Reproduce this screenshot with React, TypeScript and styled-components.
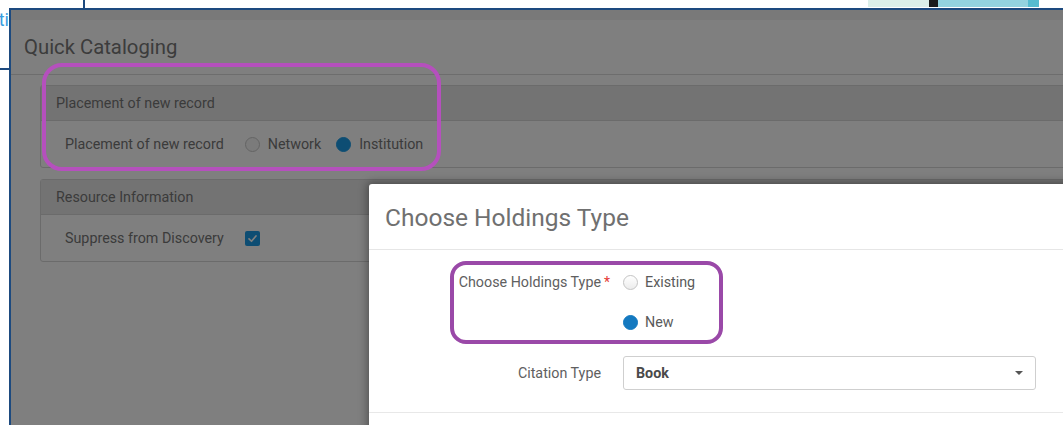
import React from 'react';
import styled, { createGlobalStyle } from 'styled-components';

const GlobalStyle = createGlobalStyle`
  html, body {
    margin: 0;
    padding: 0;
    background: #fff;
  }
  body {
    font-family: Roboto, "Noto Sans", Arial, sans-serif;
  }
`;

const App: React.FC = () => {
  return (
    <>
      <GlobalStyle />
      <Stage>
        <TopStrip>
          <Spacer style={{ width: 83 }} />
          <Rule />
          <Spacer style={{ flex: 1 }} />
          <Swatch color="#dcefe9" width={61} />
          <Swatch color="#1b1b1b" width={9} />
          <Swatch color="#94d3df" width={90} />
          <Swatch color="#56bcd0" width={11} />
          <Spacer style={{ width: 24 }} />
        </TopStrip>

        <SideStrip>
          <SideLink>ti</SideLink>
          <SideRule />
        </SideStrip>

        <Frame>
          <Toolbar />
          <PageHeader>Quick Cataloging</PageHeader>

          <Sections>
            <Section>
              <SectionHeader>Placement of new record</SectionHeader>
              <SectionRow>
                <RowLabel>Placement of new record</RowLabel>
                <Options>
                  <Option>
                    <PageRadio checked={false} />
                    <span>Network</span>
                  </Option>
                  <Option>
                    <PageRadio checked />
                    <span>Institution</span>
                  </Option>
                </Options>
              </SectionRow>
            </Section>

            <Section>
              <SectionHeader>Resource Information</SectionHeader>
              <SectionRow>
                <RowLabel>Suppress from Discovery</RowLabel>
                <Checkbox>
                  <svg width="11" height="11" viewBox="0 0 12 12">
                    <path d="M2.2 6.4 L4.9 9 L9.8 3.2" fill="none" stroke="#fff" strokeWidth="1.8" strokeLinecap="round" strokeLinejoin="round" />
                  </svg>
                </Checkbox>
              </SectionRow>
            </Section>
          </Sections>

          <Backdrop />
          <Highlight color="#b550bd" radius={20} style={{ left: 31, top: 53, width: 399, height: 108 }} />

          <Modal>
            <ModalTitle>Choose Holdings Type</ModalTitle>
            <Form>
              <FieldLabel tall>
                Choose Holdings Type
                <Star>*</Star>
              </FieldLabel>
              <RadioGroup>
                <RadioOption>
                  <ModalRadio checked={false} />
                  <span>Existing</span>
                </RadioOption>
                <RadioOption>
                  <ModalRadio checked />
                  <span>New</span>
                </RadioOption>
              </RadioGroup>

              <FieldLabel>
                Citation Type
                <Star />
              </FieldLabel>
              <Select>
                <span>Book</span>
                <Caret />
              </Select>
            </Form>
            <Highlight color="#9a49a8" radius={16} style={{ left: 81, top: 77, width: 273, height: 83 }} />
          </Modal>
        </Frame>
      </Stage>
    </>
  );
};

export default App;

const Stage = styled.div`
  display: grid;
  grid-template-columns: 9px 1fr;
  grid-template-rows: 8px 1fr;
  width: 1063px;
  height: 425px;
  overflow: hidden;
  background: #fff;
`;

const TopStrip = styled.div`
  grid-column: 1 / -1;
  display: flex;
  height: 8px;
`;

const Spacer = styled.div``;

const Rule = styled.div`
  width: 2px;
  background: #1d4a7f;
`;

const Swatch = styled.div<{ color: string; width: number }>`
  width: ${(p) => p.width}px;
  height: 7px;
  background: ${(p) => p.color};
`;

const SideStrip = styled.div`
  display: flex;
  flex-direction: column;
  overflow: hidden;
`;

const SideLink = styled.div`
  display: flex;
  justify-content: flex-end;
  margin-top: 2px;
  font-size: 18px;
  line-height: 20px;
  color: #3a9de0;
  white-space: nowrap;
`;

const SideRule = styled.div`
  margin-top: 38px;
  height: 2px;
  background: #1d4a7f;
`;

const Frame = styled.div`
  position: relative;
  overflow: hidden;
  border-top: 2px solid #1d4a7f;
  border-left: 2px solid #1d4a7f;
  background: #fff;
`;

const Toolbar = styled.div`
  height: 10px;
  background: #f3f3f3;
`;

const PageHeader = styled.div`
  display: flex;
  align-items: center;
  height: 54px;
  padding-left: 13px;
  border-bottom: 1px solid #dadada;
  font-size: 20.3px;
  color: #787878;
`;

const Sections = styled.div`
  display: flex;
  flex-direction: column;
  gap: 11px;
  padding: 10px 0 0 29px;
  margin-right: -40px;
`;

const Section = styled.div`
  border: 1px solid #d6d6d6;
  border-radius: 3px;
  background: #fff;
`;

const SectionHeader = styled.div`
  display: flex;
  align-items: center;
  height: 34px;
  padding-left: 15px;
  background: #e7e7e7;
  border-bottom: 1px solid #d6d6d6;
  font-size: 14.3px;
  color: #777;
`;

const SectionRow = styled.div`
  display: flex;
  align-items: center;
  gap: 21px;
  height: 46px;
  padding-left: 24px;
`;

const RowLabel = styled.span`
  font-size: 14.3px;
  color: #777;
`;

const Options = styled.div`
  display: flex;
  align-items: center;
  gap: 15px;
`;

const Option = styled.label`
  display: flex;
  align-items: center;
  gap: 8px;
  font-size: 14.3px;
  color: #777;
`;

const PageRadio = styled.span<{ checked: boolean }>`
  box-sizing: border-box;
  width: 15px;
  height: 15px;
  border-radius: 50%;
  border: 1px solid ${(p) => (p.checked ? '#1a9be6' : '#c8c8c8')};
  background: ${(p) => (p.checked ? '#1a9be6' : '#f6f6f6')};
`;

const Checkbox = styled.span`
  display: flex;
  align-items: center;
  justify-content: center;
  width: 15px;
  height: 15px;
  border-radius: 2px;
  background: #1a9be6;
`;

const Backdrop = styled.div`
  position: absolute;
  inset: 0;
  background: rgba(0, 0, 0, 0.5);
`;

const Highlight = styled.div<{ color: string; radius: number }>`
  position: absolute;
  box-sizing: border-box;
  border: 4px solid ${(p) => p.color};
  border-radius: ${(p) => p.radius}px;
  pointer-events: none;
`;

const Modal = styled.div`
  position: absolute;
  left: 358px;
  top: 174px;
  width: 760px;
  height: 300px;
  background: #fff;
  border-radius: 3px;
  box-shadow: 0 0 8px 2px rgba(0, 0, 0, 0.35);
`;

const ModalTitle = styled.div`
  display: flex;
  align-items: center;
  height: 66px;
  padding-left: 16px;
  padding-top: 2px;
  box-sizing: border-box;
  border-bottom: 1px solid #e6e6e6;
  font-size: 24.5px;
  color: #707070;
`;

const Form = styled.div`
  display: grid;
  grid-template-columns: 254px 413px;
  row-gap: 14px;
  padding: 12px 0 22px;
  border-bottom: 1px solid #e8e8e8;
`;

const FieldLabel = styled.div<{ tall?: boolean }>`
  display: flex;
  align-items: center;
  justify-content: flex-end;
  align-self: start;
  height: ${(p) => (p.tall ? 40 : 34)}px;
  padding-right: 10px;
  font-size: 14.3px;
  color: #606060;
`;

const Star = styled.span`
  width: 12px;
  text-align: center;
  color: #e53935;
  font-size: 14px;
`;

const RadioGroup = styled.div`
  display: flex;
  flex-direction: column;
`;

const RadioOption = styled.label`
  display: flex;
  align-items: center;
  gap: 7px;
  height: 40px;
  font-size: 14.3px;
  color: #5a5a5a;
`;

const ModalRadio = styled.span<{ checked: boolean }>`
  box-sizing: border-box;
  width: 15px;
  height: 15px;
  border-radius: 50%;
  border: 1px solid ${(p) => (p.checked ? '#1479c0' : '#c4c4c4')};
  background: ${(p) => (p.checked ? '#1479c0' : 'linear-gradient(#fff, #ececec)')};
`;

const Select = styled.div`
  display: flex;
  align-items: center;
  justify-content: space-between;
  box-sizing: border-box;
  height: 34px;
  padding: 0 12px 0 12px;
  border: 1px solid #cfcfcf;
  border-radius: 3px;
  font-size: 14.3px;
  font-weight: 700;
  color: #4a4a4a;
`;

const Caret = styled.span`
  width: 0;
  height: 0;
  border-left: 4px solid transparent;
  border-right: 4px solid transparent;
  border-top: 4px solid #555;
`;
